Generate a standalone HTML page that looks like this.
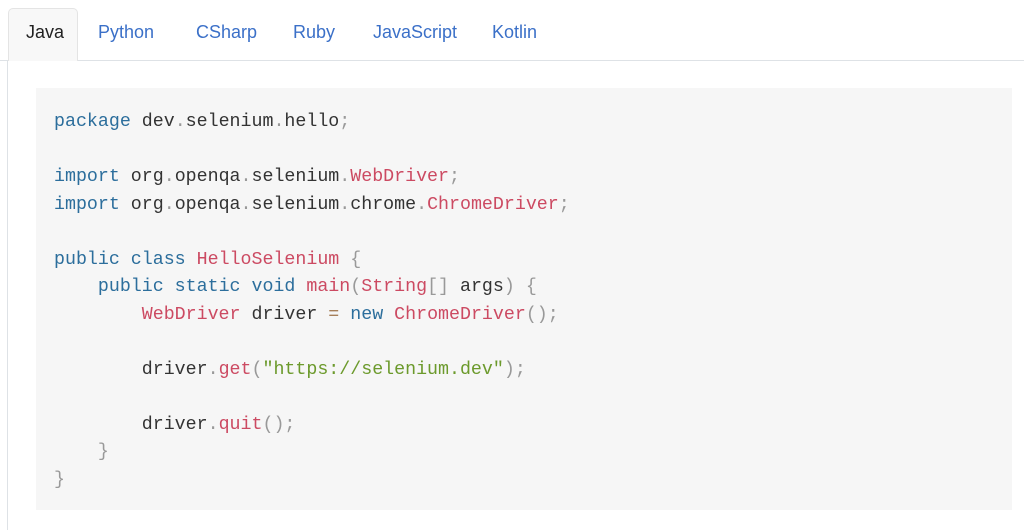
<!DOCTYPE html><html><head><style>
body{margin:0;width:1024px;height:516px;background:#fff;position:relative;overflow:hidden;font-family:"Liberation Sans",sans-serif}
.tabs{position:absolute;left:0;top:0;width:1024px;height:60px;border-bottom:1px solid #dee2e6}
.tab{position:absolute;top:22px;font-size:18px;color:#3b70c8}
.act{position:absolute;left:8px;top:8px;width:70px;height:53px;background:#f8f8f8;border:1px solid #e4e4e4;border-bottom:none;border-radius:5px 5px 0 0;box-sizing:border-box}
.box{position:absolute;left:7px;top:60px;width:1030px;height:470px;border-left:1px solid #dee2e6}
pre{position:absolute;left:36px;top:88px;width:976px;height:422px;margin:0;background:#f6f6f6;padding:0 0 0 18px;box-sizing:border-box;font-family:"Liberation Mono",monospace;font-size:18.3px;line-height:27.5px;color:#333;padding-top:21px}
.k{color:#2c6e9c}.c{color:#cc4a62}.s{color:#6c9a2c}.p{color:#999}
</style></head><body>
<div class="tabs"><div class="act"></div>
<span class="tab" style="left:26px;color:#222">Java</span>
<span class="tab" style="left:98px">Python</span>
<span class="tab" style="left:196px">CSharp</span>
<span class="tab" style="left:293px">Ruby</span>
<span class="tab" style="left:373px">JavaScript</span>
<span class="tab" style="left:492px">Kotlin</span></div>
<div class="box"></div>
<pre><span class="k">package</span> dev<span class="p">.</span>selenium<span class="p">.</span>hello<span class="p">;</span>

<span class="k">import</span> org<span class="p">.</span>openqa<span class="p">.</span>selenium<span class="p">.</span><span class="c">WebDriver</span><span class="p">;</span>
<span class="k">import</span> org<span class="p">.</span>openqa<span class="p">.</span>selenium<span class="p">.</span>chrome<span class="p">.</span><span class="c">ChromeDriver</span><span class="p">;</span>

<span class="k">public class</span> <span class="c">HelloSelenium</span> <span class="p">{</span>
    <span class="k">public static void</span> <span class="c">main</span><span class="p">(</span><span class="c">String</span><span class="p">[]</span> args<span class="p">) {</span>
        <span class="c">WebDriver</span> driver <span class="p" style="color:#a67f59">=</span> <span class="k">new</span> <span class="c">ChromeDriver</span><span class="p">();</span>

        driver<span class="p">.</span><span class="c">get</span><span class="p">(</span><span class="s">"https://selenium.dev"</span><span class="p">);</span>

        driver<span class="p">.</span><span class="c">quit</span><span class="p">();</span>
    <span class="p">}</span>
<span class="p">}</span></pre>
</body></html>
